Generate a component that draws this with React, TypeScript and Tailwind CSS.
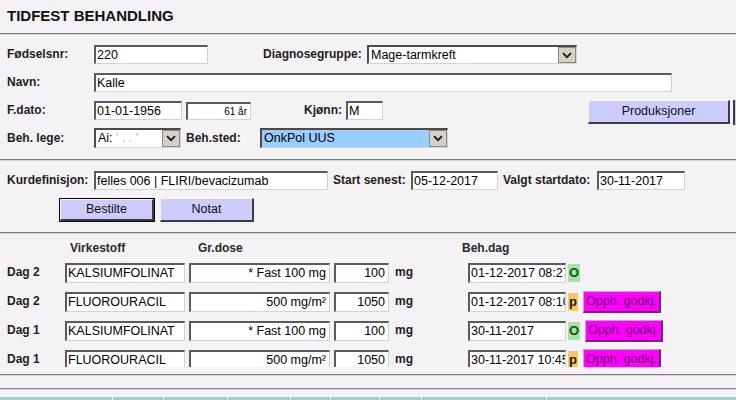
import React from "react";

const INP =
  "flex shrink-0 items-center bg-white overflow-hidden whitespace-nowrap text-[12.5px] text-black leading-none border-solid border-t-2 border-l-2 border-r border-b border-t-[#5a5a5a] border-l-[#5a5a5a] border-r-[#d2d2d2] border-b-[#d2d2d2]";

function Inp({ cls, v, right }: { cls: string; v: React.ReactNode; right?: boolean }) {
  return (
    <div className={`${INP} ${right ? "justify-end pr-[3px]" : "pl-[1px]"} ${cls}`}>
      {v}
    </div>
  );
}

function Chevron() {
  return (
    <svg width="10" height="7" viewBox="0 0 10 7">
      <path d="M1 1.2 L5 5.2 L9 1.2" fill="none" stroke="#1a1a1a" strokeWidth="1.8" />
    </svg>
  );
}

function Sel({ cls, v, bg }: { cls: string; v: React.ReactNode; bg: string }) {
  return (
    <div
      className={`flex shrink-0 items-stretch overflow-hidden border-solid border-t-2 border-l-2 border-r border-b border-t-[#4a4a4a] border-l-[#4a4a4a] border-r-[#d2d2d2] border-b-[#d2d2d2] ${cls}`}
    >
      <div className={`flex-1 flex items-center pl-[2px] text-[12.5px] text-black leading-none whitespace-nowrap overflow-hidden ${bg}`}>
        {v}
      </div>
      <div className="w-[18px] shrink-0 bg-[#d4d0c8] border border-[#8a8a8a] flex items-center justify-center">
        <Chevron />
      </div>
    </div>
  );
}

const LBL = "shrink-0 text-[12px] font-bold text-[#1e1e1e] whitespace-nowrap leading-[19px]";

function Btn({ cls, children, focus }: { cls: string; children: React.ReactNode; focus?: boolean }) {
  return (
    <div className={`shrink-0 ${focus ? "border border-black" : ""} ${cls}`}>
      <div className="w-full h-full flex items-center justify-center bg-[#ccccff] border-solid border-t border-l border-r-2 border-b-2 border-t-[#f4f4ff] border-l-[#f4f4ff] border-r-[#3c3c3c] border-b-[#3c3c3c] text-[12.5px] text-[#111] leading-none">
        {children}
      </div>
    </div>
  );
}

function Hr() {
  return <div className="w-full h-0 border-t border-b border-t-[#7c7c7c] border-b-[#d6d6d6]" />;
}

const rows = [
  { dag: "Dag 2", v: "KALSIUMFOLINAT", dose: "* Fast 100 mg", amt: "100", date: "01-12-2017 08:27", st: "O", btn: false },
  { dag: "Dag 2", v: "FLUOROURACIL", dose: "500 mg/m²", amt: "1050", date: "01-12-2017 08:10", st: "p", btn: true },
  { dag: "Dag 1", v: "KALSIUMFOLINAT", dose: "* Fast 100 mg", amt: "100", date: "30-11-2017", st: "O", btn: true },
  { dag: "Dag 1", v: "FLUOROURACIL", dose: "500 mg/m²", amt: "1050", date: "30-11-2017 10:45", st: "p", btn: true },
];

export default function App() {
  return (
    <div className="w-[736px] h-[400px] overflow-hidden bg-[#f5f2f5] font-['Liberation_Sans',Arial,sans-serif]">
      {/* Title */}
      <div className="h-[33px] pt-[7px] pl-[7px]">
        <div className="text-[15px] font-bold text-[#111] leading-[18px]">TIDFEST BEHANDLING</div>
      </div>
      <Hr />

      {/* Row 1 */}
      <div className="mt-[10px] h-[19px] flex items-center pl-[7px]">
        <div className={`${LBL} w-[87px]`}>Fødselsnr:</div>
        <Inp cls="w-[114px] h-[19px]" v="220" />
        <div className={`${LBL} ml-[55px] w-[104px]`}>Diagnosegruppe:</div>
        <Sel cls="w-[210px] h-[19px]" v="Mage-tarmkreft" bg="bg-white" />
      </div>

      {/* Row 2 */}
      <div className="mt-[9px] h-[19px] flex items-center pl-[7px]">
        <div className={`${LBL} w-[87px]`}>Navn:</div>
        <Inp cls="w-[578px] h-[19px]" v="Kalle" />
      </div>

      {/* Row 3 */}
      <div className="mt-[8px] h-[24px] flex items-start pl-[7px]">
        <div className={`${LBL} w-[87px] mt-[1px]`}>F.dato:</div>
        <Inp cls="w-[88px] h-[19px] mt-[1px]" v="01-01-1956" />
        <Inp cls="w-[65px] h-[18px] mt-[2px] ml-[4px]" v={<span className="text-[10px]">61 år</span>} right />
        <div className={`${LBL} ml-[53px] w-[42px] mt-[1px]`}>Kjønn:</div>
        <Inp cls="w-[37px] h-[19px] mt-[1px]" v="M" />
        <Btn cls="ml-[205px] w-[142px] h-[24px]">Produksjoner</Btn>
        <div className="shrink-0 ml-[3px] w-[20px] h-[25px] border-l-2 border-[#3c3c3c] bg-[#ccccff]" />
      </div>

      {/* Row 4 */}
      <div className="mt-[4px] h-[20px] flex items-center pl-[7px]">
        <div className={`${LBL} w-[87px]`}>Beh. lege:</div>
        <Sel
          cls="w-[87px] h-[20px]"
          v={
            <span>
              Ai:<span className="text-[#b8b8b8]"> ' . . '</span>
            </span>
          }
          bg="bg-white"
        />
        <div className={`${LBL} ml-[5px] w-[74px]`}>Beh.sted:</div>
        <Sel cls="w-[188px] h-[20px]" v="OnkPol UUS" bg="bg-[#99ccff]" />
      </div>

      <div className="mt-[11px]">
        <Hr />
      </div>

      {/* Row 5 */}
      <div className="mt-[10px] h-[19px] flex items-center pl-[7px]">
        <div className={`${LBL} w-[87px]`}>Kurdefinisjon:</div>
        <Inp cls="w-[234px] h-[19px]" v="felles 006 | FLIRI/bevacizumab" />
        <div className={`${LBL} ml-[5px] w-[78px]`}>Start senest:</div>
        <Inp cls="w-[87px] h-[19px]" v="05-12-2017" />
        <div className={`${LBL} ml-[5px] w-[94px]`}>Valgt startdato:</div>
        <Inp cls="w-[88px] h-[19px]" v="30-11-2017" />
      </div>

      {/* Buttons */}
      <div className="mt-[8px] h-[24px] flex items-center pl-[59px]">
        <Btn cls="w-[96px] h-[24px]" focus>
          Bestilte
        </Btn>
        <Btn cls="ml-[5px] w-[94px] h-[24px]">Notat</Btn>
      </div>

      <div className="mt-[10px]">
        <Hr />
      </div>

      {/* Headers */}
      <div className="mt-[7px] h-[14px] flex items-center pl-[70px] text-[12px] font-bold text-[#2a2a2a] leading-none">
        <div className="w-[128px] shrink-0">Virkestoff</div>
        <div className="w-[264px] shrink-0">Gr.dose</div>
        <div className="shrink-0">Beh.dag</div>
      </div>

      {/* Data rows */}
      <div className="mt-[3px] h-[109px] overflow-hidden flex flex-col">
        {rows.map((r, i) => (
          <div key={i} className="h-[29px] shrink-0 flex items-center pl-[7px]">
            <div className={`${LBL} w-[58px]`}>{r.dag}</div>
            <Inp cls="w-[120px] h-[20px]" v={r.v} />
            <Inp cls="ml-[4px] w-[141px] h-[20px]" v={r.dose} right />
            <Inp cls="ml-[4px] w-[55px] h-[20px]" v={r.amt} right />
            <div className={`${LBL} ml-[6px] w-[73px]`}>mg</div>
            <Inp cls="w-[98px] h-[20px]" v={r.date} />
            <div
              className={`shrink-0 ml-[2px] h-[18px] px-[1px] flex items-center text-[13px] font-bold leading-none ${
                r.st === "O" ? "bg-[#a8e2a8] text-[#0a5a0a]" : "bg-[#f9c865] text-[#1a1a1a]"
              }`}
            >
              {r.st}
            </div>
            {r.btn && (
              <div className="shrink-0 ml-[5px] w-[78px] h-[22px] flex items-center justify-center bg-[#ff00ff] border-solid border-t border-l border-r-2 border-b-2 border-t-[#ff80ff] border-l-[#ff80ff] border-r-[#5a3a5a] border-b-[#5a3a5a] text-[12.5px] text-[#6a006a] leading-none whitespace-nowrap">
                Opph. godkj.
              </div>
            )}
          </div>
        ))}
      </div>

      <div className="mt-[7px]">
        <Hr />
      </div>
      <div className="mt-[12px]">
        <Hr />
      </div>

      {/* Bottom strip */}
      <div className="mt-[3px] h-[4px] bg-[#eef3f6]" />
      <div className="h-[10px] bg-[#a6cbcb] flex">
        <div className="w-[113px] shrink-0 border-r border-white" />
        <div className="w-[51px] shrink-0 border-r border-white" />
        <div className="w-[64px] shrink-0 border-r border-white" />
        <div className="w-[63px] shrink-0 border-r border-white" />
        <div className="w-[40px] shrink-0 border-r border-white" />
        <div className="w-[49px] shrink-0 border-r border-white" />
        <div className="w-[42px] shrink-0 border-r border-white" />
        <div className="w-[125px] shrink-0 border-r border-white" />
        <div className="flex-1" />
      </div>
    </div>
  );
}
